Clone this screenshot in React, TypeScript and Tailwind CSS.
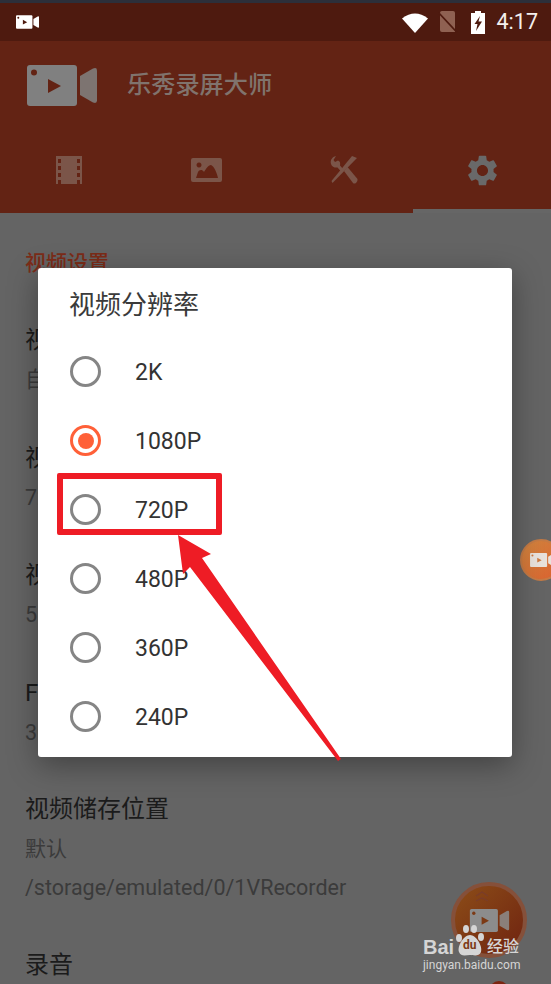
import React from "react";
import { MdSettings } from "react-icons/md";

const font = { fontFamily: '"Roboto", "Noto Sans CJK SC", sans-serif' };

function CamIcon({ className, body, play, wing }: { className?: string; body: string; play: string; wing: string }) {
  return (
    <svg viewBox="0 0 70 41" className={className}>
      <rect x="0" y="0" width="50" height="41" rx="3" fill={body} />
      <circle cx="7" cy="7.5" r="3" fill={play} />
      <path d="M21 14 L34 21 L21 28 Z" fill={play} />
      <path d="M53 11 L66 3.5 Q70 2 70 5.5 V35.5 Q70 39 66 37.5 L53 30 Z" fill={wing} />
    </svg>
  );
}

function Radio({ checked }: { checked?: boolean }) {
  return (
    <span
      className={`flex h-[31px] w-[31px] shrink-0 items-center justify-center rounded-full border-[3px] ${
        checked ? "border-[#ff6038]" : "border-[#858585]"
      }`}
    >
      {checked && <span className="h-[16px] w-[16px] rounded-full bg-[#ff6038]" />}
    </span>
  );
}

function Setting({ title, sub, className }: { title: string; sub: string; className?: string }) {
  return (
    <div className={className}>
      <div className="text-[24px] leading-[30px] text-[#1b1b1b]">{title}</div>
      <div className="mt-[10px] text-[21.5px] leading-[30px] text-[#3b3b3b]">{sub}</div>
    </div>
  );
}

const options = ["2K", "1080P", "720P", "480P", "360P", "240P"];

export default function App() {
  return (
    <div style={font} className="relative h-[984px] w-[551px] overflow-hidden bg-[#646464]">
      <div className="h-[3px] bg-[#2c2f3a]" />
      <div className="flex h-[38px] items-center justify-between bg-[#4e1a0f] pl-[16px] pr-[13px]">
        <CamIcon className="h-[14px] w-[23px]" body="#fff" play="#4e1a0f" wing="#fff" />
        <div className="flex items-center">
          <svg viewBox="0 0 26 21" className="h-[21px] w-[26px]">
            <path d="M0 6.5 Q13 -3.5 26 6.5 L13 21 Z" fill="#fff" />
          </svg>
          <svg viewBox="0 0 20 22" className="ml-[10px] h-[22px] w-[20px]">
            <path d="M4 0 H15 Q17 0 17 2 V21 H4 Q2 21 2 19 V2 Q2 0 4 0 Z" fill="#8f6152" />
            <path d="M0.5 1.5 L19.5 22" stroke="#4e1a0f" strokeWidth="1.6" />
          </svg>
          <svg viewBox="0 0 14 23" className="ml-[13px] h-[23px] w-[14px]">
            <path fillRule="evenodd" d="M4 2 V0 H10 V2 H14 V23 H0 V2 Z M9 5 L3.5 13 H6.5 L5 20 L11 10.5 H7.5 Z" fill="#fff" />
          </svg>
          <span className="ml-[12px] text-[21.5px] leading-none text-[#f4efed]">4:17</span>
        </div>
      </div>

      <div className="h-[172px] bg-[#632314]">
        <div className="flex h-[88px] items-center pl-[27px]">
          <CamIcon className="h-[41px] w-[70px]" body="#808080" play="#632314" wing="#7d7471" />
          <span className="ml-[30px] text-[24.2px] font-medium leading-none text-[#80736d]">乐秀录屏大师</span>
        </div>
        <div className="relative grid h-[84px] grid-cols-4">
          <div className="flex items-start justify-center pt-[27px]">
            <svg viewBox="0 0 26 28" className="h-[28px] w-[26px]">
              <path
                fillRule="evenodd"
                d="M0 0 H26 V28 H0 Z M2 3 V7 H5 V3 Z M21 3 V7 H24 V3 Z M2 10 V14 H5 V10 Z M21 10 V14 H24 V10 Z M2 17 V21 H5 V17 Z M21 17 V21 H24 V17 Z M2 24 V28 H5 V24 Z M21 24 V28 H24 V24 Z"
                fill="#7b5549"
              />
            </svg>
          </div>
          <div className="flex items-start justify-center pt-[29px]">
            <svg viewBox="0 0 31 24" className="h-[24px] w-[31px]">
              <path
                fillRule="evenodd"
                d="M2 0 H29 Q31 0 31 2 V22 Q31 24 29 24 H2 Q0 24 0 22 V2 Q0 0 2 0 Z M8 4.5 A2.5 2.5 0 1 0 8.01 4.5 Z M5 20 H27 C26 15 23 8 20 7 C17 7 15 11 13 14 C11 11 8 12 7 14 Z"
                fill="#7b5549"
              />
            </svg>
          </div>
          <div className="flex items-start justify-center pt-[27px]">
            <svg viewBox="0 0 28 28" className="h-[28px] w-[28px]">
              <path d="M27 2 L22 0 L1.5 25 L2.5 27 Z" fill="#7b5549" />
              <path d="M14 15 L17.5 11 L27.5 23 Q28 25 26 27 Q24 28 23 27 Z" fill="#7b5549" />
              <path
                d="M6 0 C2 1 0 4 1 8 C2 11 5 12 7.5 11.5 L11.5 16 L13.5 13.5 L10 9.5 C10.5 7 10 5 8 4.5 L5 6 L3.5 4 Z"
                fill="#7b5549"
              />
            </svg>
          </div>
          <div className="relative flex items-start justify-center pt-[23px]">
            <MdSettings className="h-[37px] w-[37px] text-[#696969]" />
            <div className="absolute bottom-0 left-0 right-0 h-[4px] bg-[#666666]" />
          </div>
        </div>
      </div>

      <div className="px-[25px] pt-[35px]">
        <div className="text-[21px] font-medium leading-[30px] text-[#7c2c18]">视频设置</div>
        <Setting className="mt-[47px]" title="视频方向" sub="自动" />
        <Setting className="mt-[48px]" title="视频分辨率" sub="720P" />
        <Setting className="mt-[47px]" title="视频质量" sub="5Mbps" />
        <Setting className="mt-[48px]" title="FPS" sub="30" />
        <div className="mt-[46px]">
          <div className="text-[24px] leading-[30px] text-[#1b1b1b]">视频储存位置</div>
          <div className="mt-[10px] text-[21px] leading-[30px] text-[#3b3b3b]">默认</div>
          <div className="mt-[9px] text-[21.5px] leading-[30px] text-[#3b3b3b]">/storage/emulated/0/1VRecorder</div>
        </div>
        <div className="mt-[47px] text-[24px] leading-[30px] text-[#1b1b1b]">录音</div>
      </div>

      {/* floating recorder bubble on the right edge */}
      <div className="absolute left-[520px] top-[539px] flex h-[42px] w-[42px] items-center rounded-full border-[2px] border-[#c47a45] bg-gradient-to-br from-[#d0853f] to-[#da5f2e] pl-[8px]">
        <CamIcon className="h-[14px] w-[24px] shrink-0" body="#e8e2dc" play="#d07a3f" wing="#e8e2dc" />
      </div>

      {/* record FAB */}
      <div className="absolute left-[451px] top-[882px] flex h-[76px] w-[76px] items-center justify-center rounded-full border-[4px] border-[#85503a] bg-gradient-to-br from-[#8c4d18] to-[#6f2210]">
        <CamIcon className="h-[23px] w-[41px]" body="#8c8c8c" play="#7c3a15" wing="#8a7f7a" />
        <svg viewBox="0 0 14 12" className="absolute left-[20px] top-[5px] h-[12px] w-[14px]">
          <path d="M1 5 L7 1 L13 5 M1 10 L7 7 L13 10" fill="none" stroke="#7a3d2a" strokeWidth="1.2" />
        </svg>
      </div>
      <div className="absolute left-[489px] top-[981px] h-[20px] w-[20px] rounded-full bg-[#7c2410]" />

      {/* dialog */}
      <div className="absolute left-[38px] top-[268px] h-[489px] w-[474px] rounded-[3px] bg-white shadow-[0_8px_30px_rgba(0,0,0,0.35)]">
        <div className="pl-[31px] pt-[22px] text-[26px] leading-[30px] text-[#3a3a3a]">视频分辨率</div>
        <div className="mt-[17px] flex flex-col">
          {options.map((o, i) => (
            <div key={o} className="flex h-[69px] items-center pl-[32px]">
              <Radio checked={i === 1} />
              <span className="ml-[34px] pt-[1px] text-[23px] leading-none text-[#333333]">{o}</span>
            </div>
          ))}
        </div>
      </div>

      {/* red annotation */}
      <div className="absolute left-[57px] top-[473px] h-[62px] w-[165px] rounded-[2px] border-[6px] border-[#ee1c25]" />
      <svg className="absolute left-0 top-0" width="551" height="984" viewBox="0 0 551 984">
        <path d="M178 535 L211 554 L202 558 L341 759 L338 761 L190 567 L183 574 Z" fill="#ee1c25" />
      </svg>

      {/* Baidu watermark */}
      <div className="absolute left-[423px] top-[925px] text-[#d5d5d5]">
        <div className="flex h-[32px] items-end">
          <span className="w-[33px] text-[20px] font-bold leading-[20px]" style={{ fontFamily: '"Liberation Sans", sans-serif' }}>
            Bai
          </span>
          <div className="relative h-[32px] w-[28px]">
            <svg viewBox="0 0 28 32" className="h-[32px] w-[28px]">
              <ellipse cx="3" cy="13" rx="3" ry="4" fill="#d5d5d5" />
              <ellipse cx="10" cy="4" rx="3" ry="4" fill="#d5d5d5" />
              <ellipse cx="18" cy="4" rx="3" ry="4" fill="#d5d5d5" />
              <ellipse cx="25" cy="12" rx="3" ry="4" fill="#d5d5d5" />
              <path d="M14 10 C20 10 27 21 25 27 C23 32 17 30 14 30 C10 30 5 32 3 27 C1 21 8 10 14 10 Z" fill="#d5d5d5" />
            </svg>
            <span className="absolute left-[7px] top-[14px] text-[12px] font-bold leading-none text-[#7c3a15]">du</span>
          </div>
          <span className="ml-[3px] text-[16px] font-medium leading-[20px]">经验</span>
        </div>
        <div className="mt-[1px] text-[12px] leading-[14px]">jingyan.baidu.com</div>
      </div>
    </div>
  );
}
